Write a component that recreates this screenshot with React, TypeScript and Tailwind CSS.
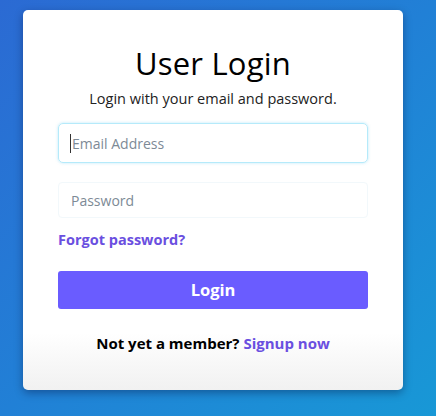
import React from 'react';

export default function App() {
  return (
    <div
      className="w-[436px] h-[416px] overflow-hidden bg-gradient-to-br from-[#2b6ad3] via-[#2180d6] to-[#1898d6] pt-[10px] pl-[23px]"
      style={{ fontFamily: '"Open Sans", "Noto Sans", sans-serif' }}
    >
      <div className="w-[380px] h-[380px] rounded-[5px] bg-gradient-to-b from-white from-85% to-[#f1f1f1] shadow-[0_3px_8px_rgba(0,0,40,0.35)] px-[35px] pt-[33px] flex flex-col">
        {/* Header */}
        <h1 className="text-center text-[31px] leading-[40px] text-black tracking-[0.2px]">User Login</h1>
        <p className="text-center text-[14.5px] leading-[20px] text-[#222] mt-[6px]">
          Login with your email and password.
        </p>

        {/* Fields */}
        <div className="mt-[14px] h-[40px] rounded-[5px] border border-[#b5eafa] shadow-[0_0_3px_rgba(120,210,245,0.5)] flex items-center px-[11px]">
          <span className="w-px h-[19px] bg-[#333] mr-px"></span>
          <span className="text-[14px] text-[#7d8a96]">Email Address</span>
        </div>
        <div className="mt-[19px] h-[36px] rounded-[4px] border border-[#f2f8fb] flex items-center px-[12px]">
          <span className="text-[14px] text-[#7d8a96]">Password</span>
        </div>

        <a className="mt-[12px] text-[14.5px] font-bold text-[#6a4fe0] leading-[20px]">Forgot password?</a>

        <button className="mt-[21px] h-[38px] w-full rounded-[3px] bg-[#6a5cff] text-white text-[16.5px] font-bold">
          Login
        </button>

        <p className="mt-[23px] text-center text-[15px] font-bold text-black">
          Not yet a member? <span className="text-[#6a4fe0]">Signup now</span>
        </p>
      </div>
    </div>
  );
}
